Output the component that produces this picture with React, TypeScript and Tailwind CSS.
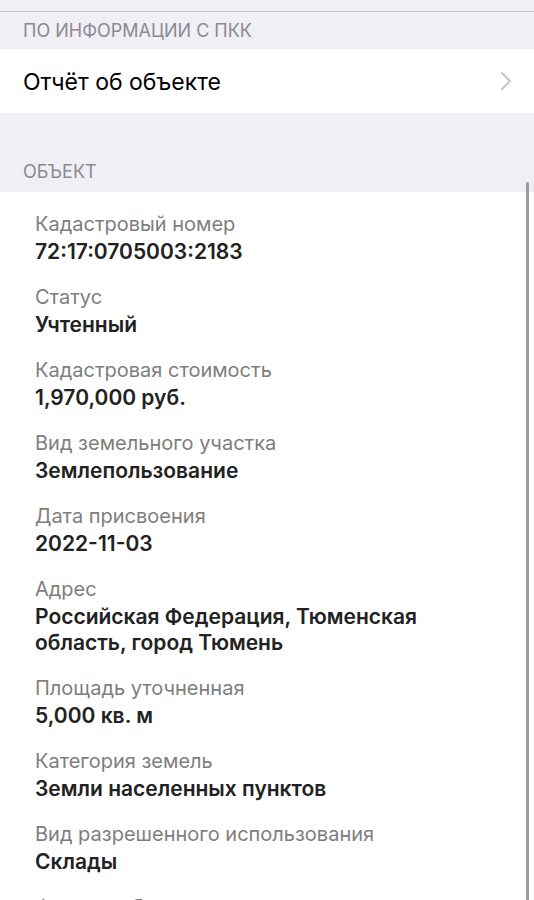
import React from "react";

const items: { label: string; value: string[] }[] = [
  { label: "Кадастровый номер", value: ["72:17:0705003:2183"] },
  { label: "Статус", value: ["Учтенный"] },
  { label: "Кадастровая стоимость", value: ["1,970,000 руб."] },
  { label: "Вид земельного участка", value: ["Землепользование"] },
  { label: "Дата присвоения", value: ["2022-11-03"] },
  { label: "Адрес", value: ["Российская Федерация, Тюменская", "область, город Тюмень"] },
  { label: "Площадь уточненная", value: ["5,000 кв. м"] },
  { label: "Категория земель", value: ["Земли населенных пунктов"] },
  { label: "Вид разрешенного использования", value: ["Склады"] },
  { label: "Форма собственности", value: ["Частная"] },
];

export default function App() {
  return (
    <div
      className="relative h-[900px] w-[534px] overflow-hidden bg-[#f0eff5]"
      style={{ fontFamily: "Inter, 'Noto Sans', sans-serif" }}
    >
      <div className="h-[12px] border-b border-[#c8c7cc]" />

      <div className="flex h-[37px] items-center px-[23px] text-[18px] uppercase text-[#8a8a8f]">
        По информации с ПКК
      </div>

      <div className="flex h-[64px] items-center justify-between bg-white pl-[23px] pr-[22px]">
        <span className="pt-[2px] text-[23px] text-black">Отчёт об объекте</span>
        <svg width="12" height="20" viewBox="0 0 12 20" fill="none">
          <path d="M2 2l8 8-8 8" stroke="#c4c4c8" strokeWidth="2" strokeLinecap="round" strokeLinejoin="round" />
        </svg>
      </div>

      <div className="flex h-[79px] items-end px-[23px] pb-[7px] text-[18px] uppercase text-[#8a8a8f]">
        Объект
      </div>

      <div className="flex flex-col gap-[17px] bg-white px-[35px] pt-[17px]">
        {items.map((it) => (
          <div key={it.label} className="flex flex-col">
            <div className="text-[20px] leading-[30px] text-[#7e7e7e]">{it.label}</div>
            {it.value.map((v) => (
              <div key={v} className="text-[21px] font-semibold leading-[26px] text-[#222222]">
                {v}
              </div>
            ))}
          </div>
        ))}
      </div>

      <div className="absolute right-[5px] top-[182px] h-[730px] w-[3px] rounded-full bg-[#9c9c9c]" />
    </div>
  );
}
